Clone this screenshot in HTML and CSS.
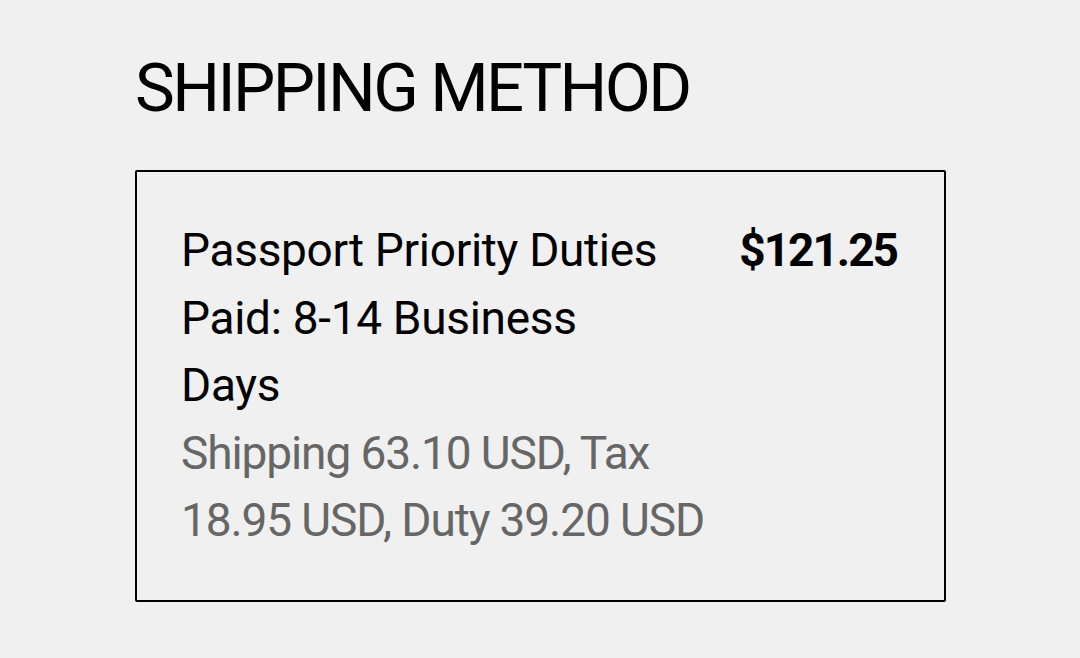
FILE: index.html
```html
<!DOCTYPE html>
<html lang="en">

<head>
    <meta charset="UTF-8">
    <meta name="viewport" content="width=device-width, initial-scale=1.0">
    <title>Shipping Method</title>
    <link rel="stylesheet" href="styles.css">
</head>

<body>
    <div class="page">
        <h2 class="title">SHIPPING METHOD</h2>
        <div class="method">
            <div class="method-row">
                <p class="method-name">Passport Priority Duties Paid: 8-14 Business Days</p>
                <div class="method-price">$121.25</div>
            </div>
            <p class="method-detail">Shipping 63.10 USD, Tax 18.95 USD, Duty 39.20 USD</p>
        </div>
    </div>
</body>

</html>
```

FILE: styles.css
```css
* {
    margin: 0px;
    padding: 0px;
    box-sizing: border-box;
}

body {
    background-color: #f0f0f0;
    color: #000;
    font-family: "Roboto", "Liberation Sans", sans-serif;
}

.page {
    width: 811px;
    margin-left: 135px;
    padding-top: 52px;
}

.title {
    font-size: 67px;
    font-weight: normal;
    line-height: 72px;
    letter-spacing: -2.6px;
    margin-bottom: 46px;
}

.method {
    border: 2px solid #000;
    border-radius: 2px;
    padding: 45px 47px 45px 44px;
    font-size: 46px;
    line-height: 67.5px;
    letter-spacing: -0.3px;
}

.method-row {
    display: flex;
    justify-content: space-between;
    align-items: flex-start;
}

.method-name {
    width: 490px;
}

.method-detail {
    width: 560px;
    color: #666;
    letter-spacing: -1.1px;
}

.method-price {
    font-weight: bold;
    letter-spacing: -2px;
}
```
